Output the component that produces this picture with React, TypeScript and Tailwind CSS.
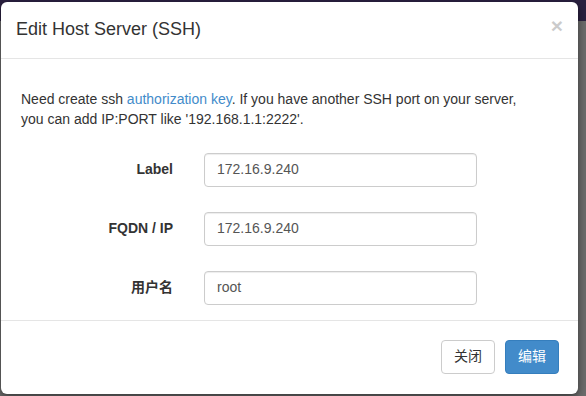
import React from "react";

const font = { fontFamily: '"Liberation Sans", Arial, "Noto Sans CJK SC", sans-serif' };

function Row({ label, value }: { label: string; value: string }) {
  return (
    <div className="flex items-center">
      <div className="w-[152px] text-right text-[14px] font-bold text-[#333]">{label}</div>
      <div className="ml-[31px] w-[273px] h-[34px] rounded-[4px] border border-[#ccc] px-[12px] flex items-center text-[14px] text-[#555] shadow-[inset_0_1px_1px_rgba(0,0,0,0.075)]">
        {value}
      </div>
    </div>
  );
}

export default function App() {
  return (
    <div
      style={font}
      className="w-[586px] h-[396px] overflow-hidden pt-[2px] pl-[1px] bg-[linear-gradient(to_bottom,#2a2040_0px,#2a2040_21px,#6c6c6c_21px,#6c6c6c_100%)]"
    >
      <div className="w-[577px] bg-white rounded-[6px] shadow-[0_3px_9px_rgba(0,0,0,0.5)]">
        <div className="px-[15px] py-[15px] border-b border-[#e5e5e5] flex justify-between items-start">
          <h4 className="text-[18px] leading-[25.7px] text-[#333]">Edit Host Server (SSH)</h4>
          <span className="text-[21px] leading-none font-bold text-black opacity-20 mt-[-2px]">×</span>
        </div>
        <div className="px-[20px] pt-[30px] pb-[15px]">
          <p className="w-[510px] text-[14px] leading-[20px] text-[#333]">
            Need create ssh <span className="text-[#428bca]">authorization key</span>. If you have another SSH port on your server,
            you can add IP:PORT like '192.168.1.1:2222'.
          </p>
          <div className="mt-[24px] flex flex-col gap-[25px]">
            <Row label="Label" value="172.16.9.240" />
            <Row label="FQDN / IP" value="172.16.9.240" />
            <Row label="用户名" value="root" />
          </div>
        </div>
        <div className="border-t border-[#e5e5e5] pl-[20px] pr-[19px] pt-[19px] pb-[20px] flex justify-end gap-[10px]">
          <button className="h-[34px] w-[54px] rounded-[4px] border border-[#ccc] bg-white text-[14px] text-[#333]">关闭</button>
          <button className="h-[34px] w-[54px] rounded-[4px] border border-[#357ebd] bg-[#428bca] text-[14px] text-white">编辑</button>
        </div>
      </div>
    </div>
  );
}
